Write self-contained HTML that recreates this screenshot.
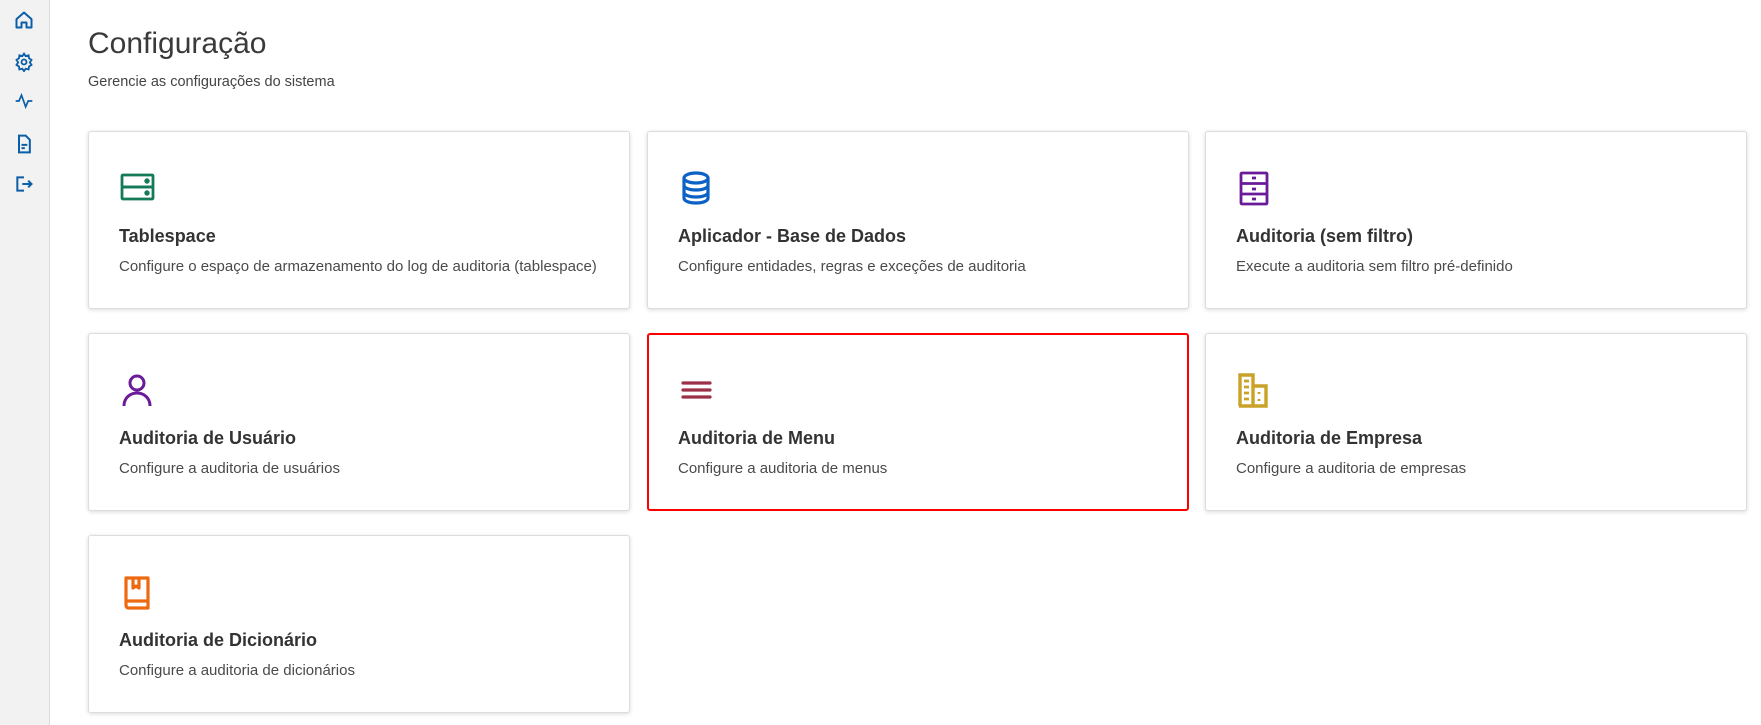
<!DOCTYPE html>
<html><head><meta charset="utf-8"><style>
*{box-sizing:border-box;margin:0;padding:0}
body{width:1761px;height:725px;background:#fff;font-family:"Liberation Sans",sans-serif;position:relative;overflow:hidden}
.side{position:absolute;left:0;top:0;width:50px;height:725px;background:#f2f2f2;border-right:1px solid #dcdcdc}
.side svg{position:absolute;left:14px;width:20px;height:20px}
h1{position:absolute;left:88px;top:27px;font-size:30px;font-weight:400;color:#3a3a3a}
.sub{position:absolute;left:88px;top:74px;font-size:14.5px;color:#444}
.card{position:absolute;width:542px;height:178px;background:#fff;border:1px solid #ddd;border-radius:3px;box-shadow:0 1px 4px rgba(0,0,0,.15)}
.card svg{position:absolute;left:30px;top:38px;width:36px;height:36px}
.card .t{position:absolute;left:30px;top:94px;font-size:18px;font-weight:600;color:#333}
.card .d{position:absolute;left:30px;top:126px;font-size:15px;color:#4a4a4a}
.sel{border:2px solid #f00;box-shadow:none}
.sel svg{left:29px;top:37px}.sel .t{left:29px;top:93px}.sel .d{left:29px;top:125px}
</style></head><body>
<div class="side">
<svg style="top:10px" viewBox="0 0 24 24" fill="none" stroke="#0b5ea8" stroke-width="2.4" stroke-linejoin="round"><path d="M3 11l9-8 9 8v10h-6v-6h-6v6H3z"/></svg>
<svg style="top:52px" viewBox="0 0 24 24" fill="none" stroke="#0b5ea8" stroke-width="2.2"><circle cx="12" cy="12" r="3"/><path d="M12 2l2 3 3.5-1 .5 3.5 3 2-2 3 2 3-3 2-.5 3.5-3.5-1-2 3-2-3-3.5 1-.5-3.5-3-2 2-3-2-3 3-2 .5-3.5 3.5 1z"/></svg>
<svg style="top:91px" viewBox="0 0 24 24" fill="none" stroke="#0b5ea8" stroke-width="2"><path d="M2 12h4l3-7 5 14 3-7h5"/></svg>
<svg style="top:134px" viewBox="0 0 24 24" fill="none" stroke="#0b5ea8" stroke-width="2.4"><path d="M6 2h8l5 5v15H6z"/><path d="M9 13h7M9 17h4"/></svg>
<svg style="top:174px" viewBox="0 0 24 24" fill="none" stroke="#0b5ea8" stroke-width="2.4"><path d="M12 4H4v16h8M10 12h11M17 8l4 4-4 4"/></svg>
</div>
<h1>Configuração</h1>
<div class="sub">Gerencie as configurações do sistema</div>

<div class="card" style="left:88px;top:131px"><svg viewBox="0 0 36 36" fill="none" stroke="#137a5a" stroke-width="2.8"><rect x="3" y="5" width="31" height="12" rx="1"/><rect x="3" y="17" width="31" height="12" rx="1"/><circle cx="28" cy="11" r="1.3" fill="#137a5a"/><circle cx="28" cy="23" r="1.3" fill="#137a5a"/></svg><div class="t">Tablespace</div><div class="d">Configure o espaço de armazenamento do log de auditoria (tablespace)</div></div>

<div class="card" style="left:647px;top:131px"><svg viewBox="0 0 36 36" fill="none" stroke="#0b62c4" stroke-width="3.2"><ellipse cx="18" cy="8" rx="12" ry="5"/><path d="M6 8v20c0 3 5 5 12 5s12-2 12-5V8M6 15c0 3 5 5 12 5s12-2 12-5M6 22c0 3 5 5 12 5s12-2 12-5"/></svg><div class="t">Aplicador - Base de Dados</div><div class="d">Configure entidades, regras e exceções de auditoria</div></div>

<div class="card" style="left:1205px;top:131px"><svg viewBox="0 0 36 36" fill="none" stroke="#6a1b9a" stroke-width="2.8"><rect x="5" y="3" width="26" height="31" rx="1"/><path d="M5 13.5h26M5 24h26M16 8h4M16 19h4M16 29h4"/></svg><div class="t">Auditoria (sem filtro)</div><div class="d">Execute a auditoria sem filtro pré-definido</div></div>

<div class="card" style="left:88px;top:333px"><svg viewBox="0 0 36 36" fill="none" stroke="#6a1b9a" stroke-width="3"><circle cx="18" cy="11" r="7"/><path d="M5 34c0-8 6-13 13-13s13 5 13 13"/></svg><div class="t">Auditoria de Usuário</div><div class="d">Configure a auditoria de usuários</div></div>

<div class="card sel" style="left:647px;top:333px"><svg viewBox="0 0 36 36" fill="none" stroke="#9b3048" stroke-width="3.2" stroke-linecap="round"><path d="M5 11h27M5 18h27M5 25h27"/></svg><div class="t">Auditoria de Menu</div><div class="d">Configure a auditoria de menus</div></div>

<div class="card" style="left:1205px;top:333px"><svg viewBox="0 0 36 36" fill="none" stroke="#c9a227" stroke-width="3.4"><path d="M4 34V3h13v31M17 14h13v20H3"/><path d="M8 9h5M8 15h5M8 21h5M8 27h5M23 20v2M23 27v2" stroke-width="2.8"/></svg><div class="t">Auditoria de Empresa</div><div class="d">Configure a auditoria de empresas</div></div>

<div class="card" style="left:88px;top:535px"><svg viewBox="0 0 36 36" fill="none" stroke="#ee6a10" stroke-width="3.2" stroke-linejoin="round"><path d="M7 4h22v30H10c-2 0-3-1-3-3z"/><path d="M7 27h22M14 4v10l3-2 3 2V4"/></svg><div class="t">Auditoria de Dicionário</div><div class="d">Configure a auditoria de dicionários</div></div>
</body></html>
